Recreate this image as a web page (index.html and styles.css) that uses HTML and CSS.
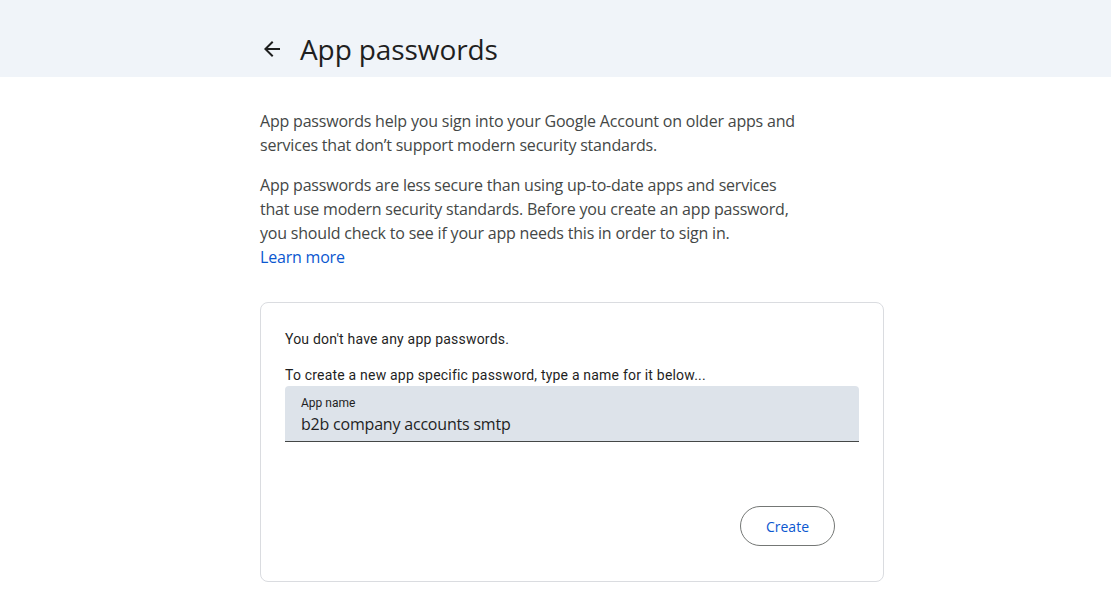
FILE: index.html
```html
<!DOCTYPE html>
<html lang="en">
<head>
<meta charset="utf-8">
<title>App passwords</title>
<link rel="stylesheet" href="styles.css">
</head>
<body>
<header class="topbar">
  <div class="topbar-inner">
    <button class="back" aria-label="Back">
      <svg width="24" height="24" viewBox="0 0 24 24"><path d="M20 11H7.83l5.59-5.59L12 4l-8 8 8 8 1.41-1.41L7.83 13H20v-2z" fill="#1f1f1f"/></svg>
    </button>
    <h1 class="title">App passwords</h1>
  </div>
</header>
<main class="content">
  <p class="para">App passwords help you sign into your Google Account on older apps and services that don’t support modern security standards.</p>
  <p class="para">App passwords are less secure than using up-to-date apps and services that use modern security standards. Before you create an app password, you should check to see if your app needs this in order to sign in.<br><a class="link" href="#">Learn more</a></p>
  <section class="card">
    <p class="note">You don't have any app passwords.</p>
    <p class="note note-2">To create a new app specific password, type a name for it below...</p>
    <div class="field">
      <span class="field-label">App name</span>
      <span class="field-value">b2b company accounts smtp</span>
    </div>
    <div class="actions">
      <button class="create">Create</button>
    </div>
  </section>
</main>
</body>
</html>
```
FILE: styles.css
```css
* { box-sizing: border-box; }
html, body { margin: 0; padding: 0; background: #fff; }
body { font-family: "Open Sans", "Noto Sans", sans-serif; color: #1f1f1f; }

.topbar { background: #f0f4f9; height: 77px; }
.topbar-inner { display: flex; align-items: center; padding-left: 260px; padding-top: 20px; height: 100%; }
.back { background: none; border: 0; padding: 0; width: 24px; height: 24px; margin-right: 16px; display: flex; }
.title { margin: 0; font-family: "Open Sans", sans-serif; font-weight: 400; font-size: 28px; letter-spacing: -0.1px; color: #1f1f1f; }

.content { padding: 32px 0 40px 260px; width: 884px; }
.para { margin: 0 0 16px; font-size: 16px; line-height: 24px; color: #444746; width: 544px; letter-spacing: -0.2px; }
.link { color: #0b57d0; text-decoration: none; }

.card { margin-top: 33px; width: 624px; border: 1px solid #dadce0; border-radius: 8px; padding: 26px 24px 35px 24px; }
.note { margin: 0; font-family: Roboto, sans-serif; font-size: 14px; line-height: 20px; color: #1f1f1f; letter-spacing: 0.2px; }
.note-2 { margin-top: 16px; }
.field { background: #dde3ea; border-radius: 4px 4px 0 0; border-bottom: 1px solid #444746; height: 56px; margin-top: 1px; padding: 9px 16px 0; display: flex; flex-direction: column; }
.field-label { font-family: Roboto, sans-serif; font-size: 12px; line-height: 16px; color: #1f1f1f; }
.field-value { font-size: 16px; line-height: 24px; color: #1f1f1f; letter-spacing: -0.2px; margin-top: 1px; }
.actions { display: flex; justify-content: flex-end; margin-top: 64px; padding-right: 24px; }
.create { height: 40px; width: 95px; border: 1px solid #747775; border-radius: 20px; background: #fff; color: #0b57d0; font-family: "Open Sans", sans-serif; font-size: 14px; font-weight: 500; cursor: pointer; }
```
